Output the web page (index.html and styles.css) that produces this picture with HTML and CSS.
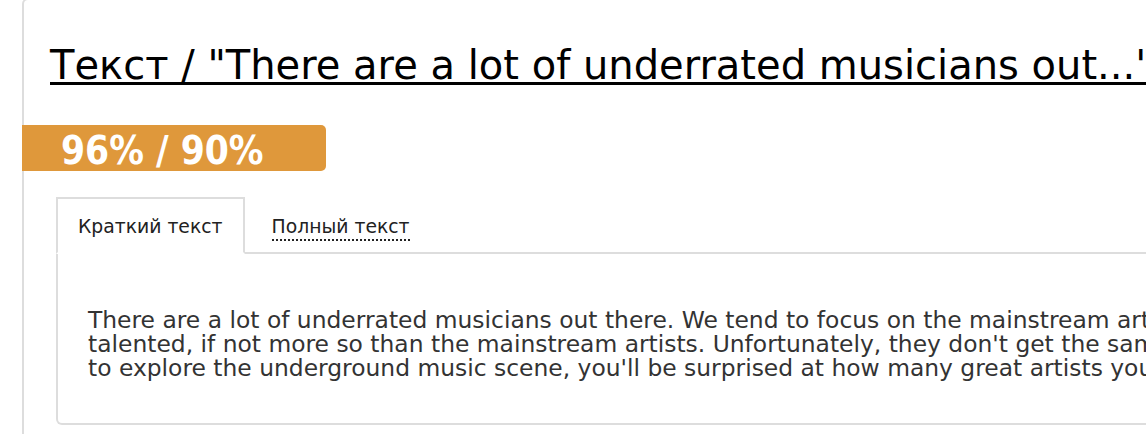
FILE: index.html
```html
<!DOCTYPE html>
<html lang="ru">
<head>
<meta charset="utf-8">
<title>Текст</title>
<link rel="stylesheet" href="styles.css">
</head>
<body>
<div class="panel">
  <h1 class="title"><a href="#" class="title-link">Текст / "There are a lot of underrated musicians out..."</a></h1>
  <div class="score">96% / 90%</div>
  <div class="tabs">
    <ul class="tab-list">
      <li class="tab tab-active">Краткий текст</li>
      <li class="tab"><span class="tab-link">Полный текст</span></li>
    </ul>
    <div class="tab-body">
      <p class="tab-text">There are a lot of underrated musicians out there. We tend to focus on the mainstream artists, but there are many musicians who are just as<br>talented, if not more so than the mainstream artists. Unfortunately, they don't get the same recognition. If you take the time<br>to explore the underground music scene, you'll be surprised at how many great artists you'll find.</p>
    </div>
  </div>
</div>
</body>
</html>
```

FILE: styles.css
```css
html, body {
  margin: 0;
  padding: 0;
  background: #ffffff;
  overflow: hidden;
}

body {
  font-family: "DejaVu Sans", sans-serif;
  color: #333333;
}

.panel {
  margin: -2px 0 0 22px;
  width: 1600px;
  height: 440px;
  border: 2px solid #dddddd;
  border-radius: 6px 0 0 0;
  background: #ffffff;
}

.title {
  margin: 41px 0 0 26px;
  font-size: 40px;
  line-height: 48px;
  font-weight: normal;
  white-space: nowrap;
}

.title-link {
  color: #000000;
  text-decoration: underline;
  text-decoration-thickness: 3px;
  text-underline-offset: 3px;
}

.score {
  margin: 36px 0 0 -2px;
  width: 265px;
  height: 41px;
  padding: 5px 0 0 39px;
  line-height: 41px;
  background: #df983b;
  border-radius: 0 5px 5px 0;
  color: #ffffff;
  font-family: "DejaVu Sans Condensed", "DejaVu Sans", sans-serif;
  font-stretch: condensed;
  font-weight: bold;
  font-size: 38.5px;
  white-space: nowrap;
}

.tabs {
  margin: 26px 0 0 32px;
}

.tab-list {
  display: flex;
  gap: 5px;
  margin: 0;
  padding: 0;
  list-style: none;
  border-bottom: 2px solid #dddddd;
}

.tab {
  padding: 16px 20px 13px 20px;
  margin-bottom: -2px;
  border: 2px solid transparent;
  font-size: 18.8px;
  line-height: 24px;
  color: #222222;
  white-space: nowrap;
}

.tab-active {
  border-color: #dddddd;
  border-bottom-color: #ffffff;
  background: #ffffff;
}

.tab-link {
  border-bottom: 2px dotted #222222;
  padding-bottom: 2px;
}

.tab-body {
  border: 2px solid #dddddd;
  border-top: none;
  border-radius: 0 0 0 6px;
  padding: 54px 30px 43px 30px;
}

.tab-text {
  margin: 0;
  font-size: 23.4px;
  line-height: 24px;
  color: #333333;
  white-space: nowrap;
}
```
